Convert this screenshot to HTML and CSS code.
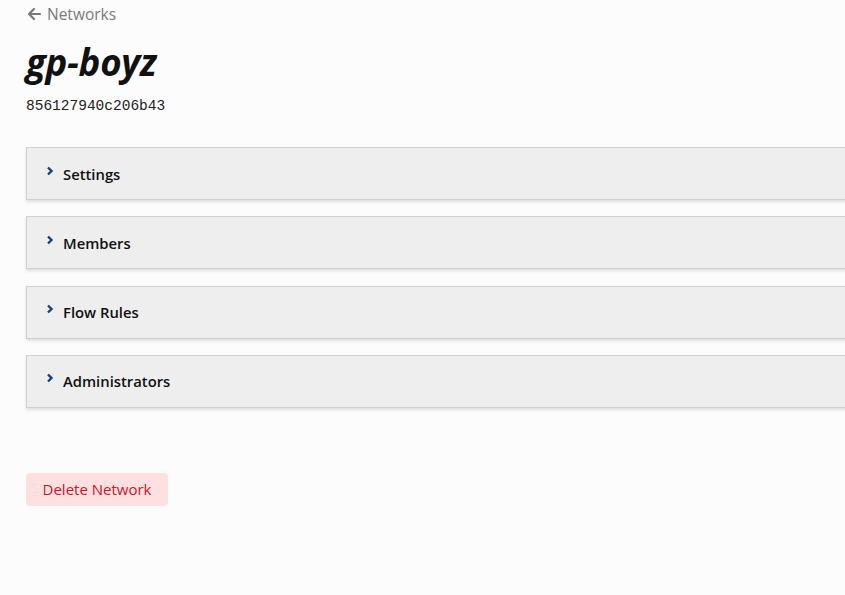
FILE: index.html
```html
<!DOCTYPE html>
<html>
<head>
<meta charset="utf-8">
<link rel="stylesheet" href="styles.css">
</head>
<body>
<main class="page">
  <a class="back" href="#"><svg class="back-icon" viewBox="0 0 14 14" width="14" height="14"><path d="M7 2 L2 7 L7 12 M2.5 7 H13" fill="none" stroke="#7a7a7a" stroke-width="2.2" stroke-linecap="round" stroke-linejoin="round"/></svg>Networks</a>
  <h1 class="title">gp-boyz</h1>
  <div class="net-id">856127940c206b43</div>
  <div class="panels">
    <div class="panel"><svg class="chev" viewBox="0 0 8 10" width="8" height="10"><path d="M2 1.5 L5.5 5 L2 8.5" fill="none" stroke="#17407e" stroke-width="2.4"/></svg><span>Settings</span></div>
    <div class="panel"><svg class="chev" viewBox="0 0 8 10" width="8" height="10"><path d="M2 1.5 L5.5 5 L2 8.5" fill="none" stroke="#17407e" stroke-width="2.4"/></svg><span>Members</span></div>
    <div class="panel"><svg class="chev" viewBox="0 0 8 10" width="8" height="10"><path d="M2 1.5 L5.5 5 L2 8.5" fill="none" stroke="#17407e" stroke-width="2.4"/></svg><span>Flow Rules</span></div>
    <div class="panel"><svg class="chev" viewBox="0 0 8 10" width="8" height="10"><path d="M2 1.5 L5.5 5 L2 8.5" fill="none" stroke="#17407e" stroke-width="2.4"/></svg><span>Administrators</span></div>
  </div>
  <button class="delete">Delete Network</button>
</main>
</body>
</html>
```
FILE: styles.css
```css
html, body {
  margin: 0;
  padding: 0;
  background: #fcfcfc;
  overflow: hidden;
  font-family: "Open Sans", "Noto Sans", sans-serif;
}
.page {
  padding: 3px 0 0 26px;
  width: 860px;
}
.back {
  display: flex;
  align-items: center;
  gap: 6px;
  color: #7a7a7a;
  text-decoration: none;
  font-size: 15.5px;
  height: 22px;
}
.back-icon { margin-left: 1px; }
.title {
  margin: 17px 0 0 0;
  font-size: 36.7px;
  font-style: italic;
  font-weight: 700;
  color: #111;
  line-height: 40px;
  letter-spacing: -0.3px;
}
.net-id {
  margin-top: 16px;
  font-family: "Liberation Mono", monospace;
  font-size: 14.5px;
  color: #222;
  line-height: 16px;
}
.panels {
  margin-top: 33px;
  display: flex;
  flex-direction: column;
  gap: 16.3px;
}
.panel {
  height: 51px;
  background: #eeeeee;
  border: 1px solid #cfcfcf;
  box-shadow: 0 2px 3px rgba(0,0,0,0.12);
  display: flex;
  align-items: center;
  padding-left: 19px;
  gap: 9px;
  font-size: 14.8px;
  font-weight: 600;
  color: #111;
}
.chev { margin-top: -6px; }
.delete {
  margin-top: 65px;
  background: #ffe0e1;
  color: #c8162a;
  border: none;
  border-radius: 4px;
  font-family: inherit;
  font-size: 15px;
  width: 142px;
  height: 33px;
  padding: 0;
}
```
